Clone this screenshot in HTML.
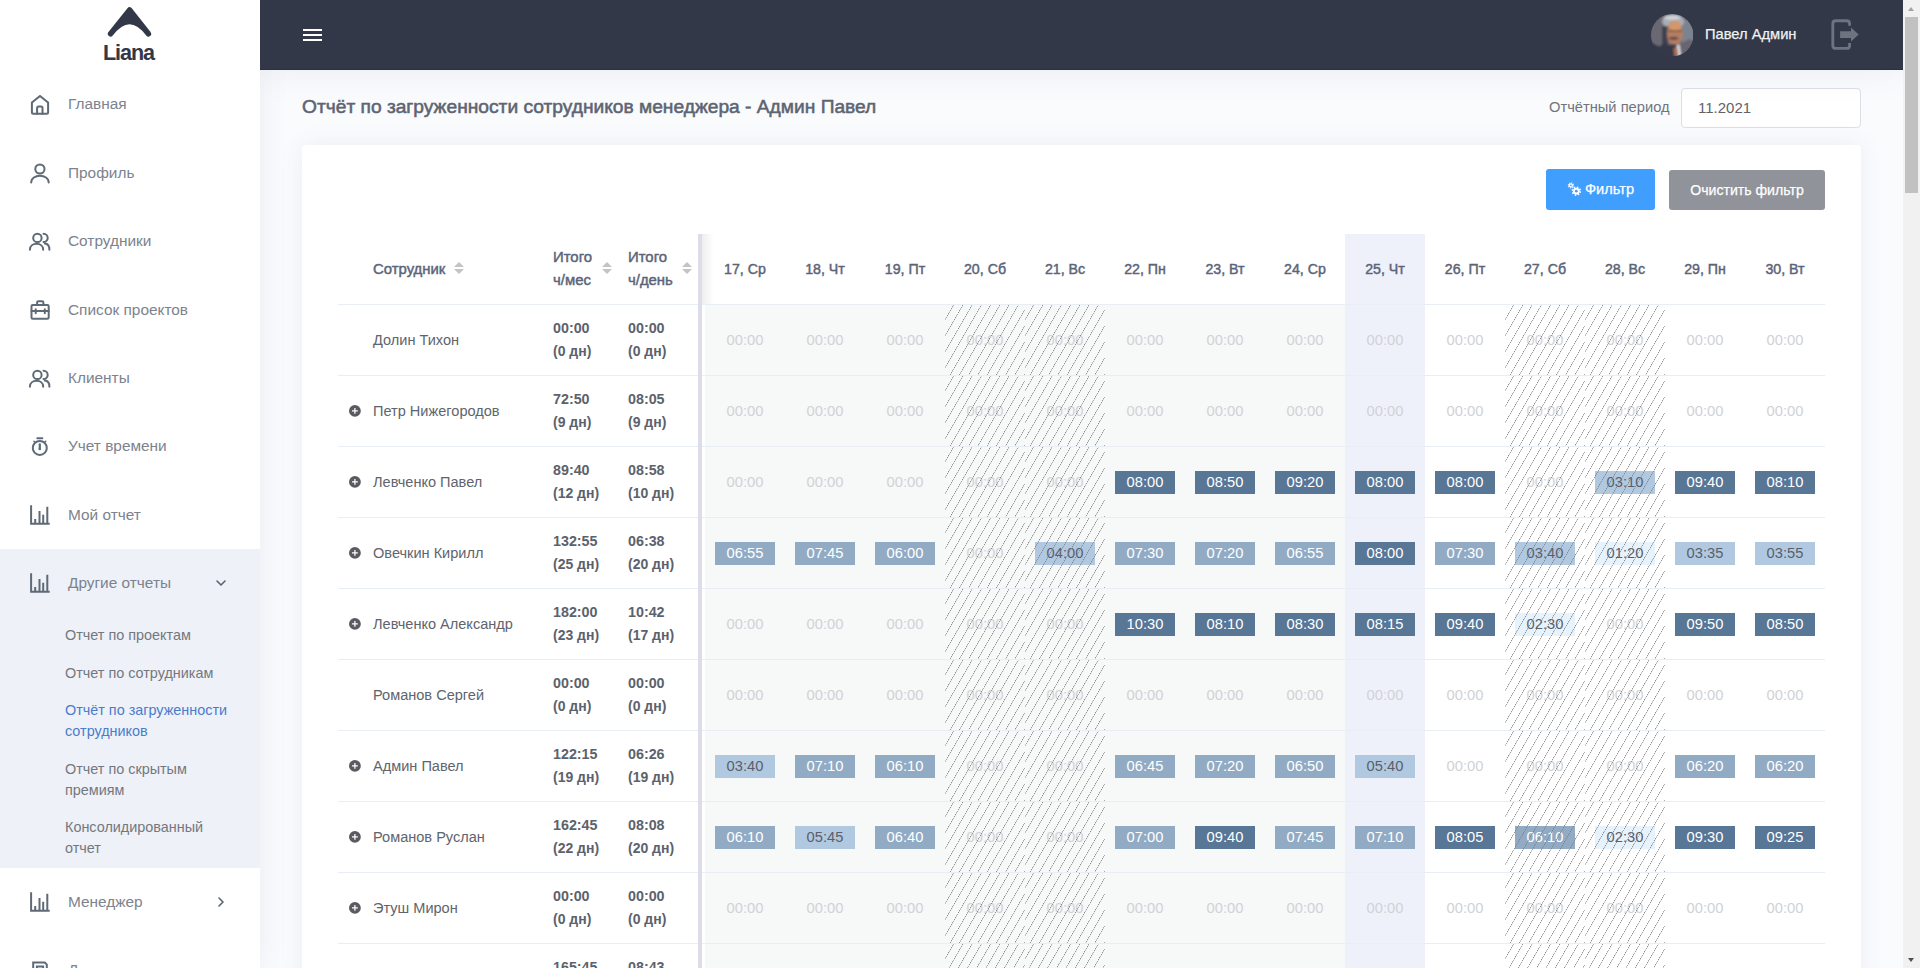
<!DOCTYPE html>
<html lang="ru">
<head>
<meta charset="utf-8">
<title>Liana</title>
<style>
*{box-sizing:border-box;margin:0;padding:0}
html,body{width:1920px;height:968px;overflow:hidden;background:#fafbfd;font-family:"Liberation Sans",sans-serif;color:#5a6270}
i{font-style:normal;display:block}
#side{position:absolute;left:0;top:0;width:260px;height:968px;background:#fff;overflow:hidden;z-index:3}
#sideshadow{position:absolute;left:0;top:0;width:260px;height:968px;box-shadow:0 0 28px 0 rgba(70,75,130,.09);z-index:1}
#logo{position:absolute;left:0;top:0;width:260px;height:70px}
#logo .lt{position:absolute;left:-1.5px;width:260px;top:40px;text-align:center;font-weight:bold;font-size:21.6px;line-height:26px;color:#323847;letter-spacing:-1.05px}
.mi{position:absolute;left:0;width:260px;height:68px;font-size:15.4px;color:#7c838e}
.mi svg{position:absolute;left:28px;top:23px;width:24px;height:24px;stroke:#5f6a77;fill:none;stroke-width:2;stroke-linecap:round;stroke-linejoin:round}
.mi span{position:absolute;left:68px;top:24px;line-height:20px;white-space:nowrap}
.mi .arr{position:absolute;left:214px;top:27px;width:14px;height:14px;stroke:#59636f;stroke-width:1.6}
#grp{position:absolute;left:0;top:549px;width:260px;height:319px;background:#eef1f7}
.si{position:absolute;left:65px;margin-top:1px;font-size:14.4px;line-height:21.4px;color:#73787f;white-space:nowrap}
.si.act{color:#4a7ccc}
#top{position:absolute;left:260px;top:0;width:1643px;height:70px;background:#323847;box-shadow:0 0 36px 0 rgba(70,75,130,.085);border-bottom:1px solid #2a3040;z-index:2}
#burger{position:absolute;left:42.5px;top:29px;width:19px;height:12px}
#burger b{position:absolute;left:0;width:19px;height:2px;background:#fff}
#uname{-webkit-text-stroke:.25px #f0f1f3;position:absolute;left:1445px;top:24px;font-size:14.7px;line-height:20px;color:#f0f1f3;white-space:nowrap}
#scroll{z-index:4;position:absolute;left:1903px;top:0;width:17px;height:968px;background:#f1f1f1}
#scroll .th{position:absolute;left:2px;top:17px;width:13px;height:176px;background:#c1c1c1}
#scroll .up,#scroll .dn{position:absolute;left:5px;width:0;height:0;border-left:3.5px solid transparent;border-right:3.5px solid transparent}
#scroll .up{top:7px;border-bottom:4px solid #a3a3a3}
#scroll .dn{top:958px;border-top:4px solid #505050}
#title{position:absolute;left:302px;top:95px;font-size:19.2px;line-height:24px;font-weight:normal;-webkit-text-stroke:.55px #5d6472;color:#5d6472;white-space:nowrap}
#plabel{position:absolute;left:1549px;top:97px;font-size:14.7px;line-height:20px;color:#70757d;white-space:nowrap}
#pinput{position:absolute;left:1681px;top:88px;width:180px;height:40px;background:#fff;border:1px solid #dcdfe6;border-radius:4px;font-size:15px;line-height:38px;padding-left:16px;color:#606266}
#card{position:absolute;left:302px;top:145px;width:1559px;height:900px;background:#fff;border-radius:4px;box-shadow:0 0 24px 0 rgba(70,75,130,.08)}
.btn{-webkit-text-stroke:.25px #fff;position:absolute;height:41px;border-radius:3px;color:#fff;font-size:14.4px;line-height:41px;text-align:center;white-space:nowrap}
#bf{left:1546px;top:169px;width:109px;background:#409eff;font-size:14.6px;text-align:left}
#bc{left:1669px;top:170px;width:156px;height:40px;line-height:40px;background:#909399;font-size:14.1px}
#tbl{position:absolute;left:338px;top:234px;width:1487px;height:760px}
.thead{position:absolute;left:0;top:0;width:1487px;height:70px;font-weight:normal;-webkit-text-stroke:.45px #5b6478;font-size:14.9px;color:#5b6478}
.thead .hc{position:absolute;top:0;height:70px}
.thead .hc span{position:absolute;left:0;top:50%;transform:translateY(-50%);line-height:23px;white-space:nowrap}
.thead .c-name{left:35px;width:180px}
.thead .c-m{left:215px;width:75px}
.thead .c-d{left:290px;width:70px}
.sort{position:absolute;top:28px;width:10px;height:13px}
.c-name .sort{left:81px}.c-m .sort{left:49px}.c-d .sort{left:54px}
.sort:before,.sort:after{content:"";position:absolute;left:0;width:0;height:0;border-left:5px solid transparent;border-right:5px solid transparent}
.sort:before{top:0;border-bottom:5px solid #c4c4c6}
.sort:after{top:7px;border-top:5px solid #c4c4c6}
.hd{position:absolute;top:0;width:80px;height:70px;line-height:71px;font-size:14.2px;text-align:center;white-space:nowrap}
.hd.today{background:#eff1fa}
.tr{position:absolute;left:0;width:1487px;height:71px;border-top:1px solid #e9edf4;font-size:14.55px;color:#60656d}
.tr .c-name{position:absolute;left:35px;top:0;line-height:70px;white-space:nowrap}
.tr .c-m,.tr .c-d{position:absolute;top:12px;line-height:23px;font-weight:bold;font-size:14.3px;color:#5c626c;white-space:nowrap}
.tr small{font-size:14px}
.tr .c-m{left:215px}
.tr .c-d{left:290px}
.plus{position:absolute;left:11.3px;top:29px;width:11.8px;height:11.8px}
.td{position:absolute;top:0;width:80px;height:70px;text-align:center;font-size:14.7px;line-height:70px;color:#d0d2d5}
.td.past{background:#f7f8f8}
.td.today{background:#eff1fa}
.td.we:after{content:"";position:absolute;left:0;top:0;width:80px;height:70px;background-image:repeating-linear-gradient(120deg,rgba(125,125,125,0) .1px,rgba(125,125,125,0) 7.1px,rgba(125,125,125,.87) 7.28px,rgba(125,125,125,.84) 7.5px,rgba(125,125,125,.42) 7.7px,rgba(125,125,125,0) 8.1px)}
.td span{position:absolute;left:10px;top:24px;width:60px;height:23px;line-height:23px}
.td .z{color:#d0d2d6}
.td .b1{background:#e6f2fc;color:#5a5f6b}
.td .b2{background:#b1c9e0;color:#5a5f6b}
.td .b3{background:#92abc4;color:#fff}
.td .b4{background:#587696;color:#fff}
#divider{position:absolute;left:360px;top:0;width:4px;height:760px;background:#dcdde8}
#dshadow{position:absolute;left:364px;top:0;width:12px;height:70px;background:linear-gradient(90deg,#eeeef1,#fff)}
</style>
</head>
<body>
<div id="sideshadow"></div>
<div id="side">
 <div id="logo">
  <svg style="position:absolute;left:90px;top:0" width="80" height="70" viewBox="0 0 80 70"><path d="M20.6 33.8 L39.6 9.95 L58.4 33.8 Q39.6 9.1 20.6 33.8 Z" fill="#323847" stroke="#323847" stroke-width="5.5" stroke-linejoin="round" stroke-linecap="round"/></svg>
  <div class="lt">Liana</div>
 </div>
 <div id="grp"></div>
 <div class="mi" style="top:70px"><svg viewBox="0 0 24 24"><path d="M3.9 9.6 L12 2.900 L20.1 9.6 V19.2 Q20.1 20.7 18.6 20.7 H5.4 Q3.9 20.7 3.9 19.2 Z"/><path d="M9.1 20.7 V14.9 Q9.1 13.4 10.6 13.4 H13 Q14.5 13.4 14.5 14.9 V20.7"/></svg><span>Главная</span></div>
 <div class="mi" style="top:139px"><svg viewBox="0 0 24 24"><circle cx="11.9" cy="7" r="4.6"/><path d="M3.2 20.6 C3.2 11.500 20.7 11.500 20.7 20.6"/></svg><span>Профиль</span></div>
 <div class="mi" style="top:207px"><svg viewBox="0 0 24 24"><circle cx="9.4" cy="7.9" r="4.2"/><path d="M1.9 19.7 C1.9 11.800 15.2 11.800 15.2 19.7"/><path d="M15.5 3.7 A4.2 4.2 0 0 1 19.7 7.9 A4.2 4.2 0 0 1 15.5 12.100"/><path d="M16.8 13.6 C19.5 13.800 21.4 16 21.4 19.7"/></svg><span>Сотрудники</span></div>
 <div class="mi" style="top:276px"><svg viewBox="0 0 24 24"><rect x="3.5" y="6" width="17.2" height="13.7" rx="1.3"/><path d="M9.1 6 V3.6 Q9.1 2.300 10.4 2.300 H14.1 Q15.4 2.300 15.4 3.6 V6"/><path d="M3.5 12 H20.7"/><path d="M7.7 10.300 V14.300 M16.8 10.300 V14.300"/></svg><span>Список проектов</span></div>
 <div class="mi" style="top:344px"><svg viewBox="0 0 24 24"><circle cx="9.4" cy="7.9" r="4.2"/><path d="M1.9 19.7 C1.9 11.800 15.2 11.800 15.2 19.7"/><path d="M15.5 3.7 A4.2 4.2 0 0 1 19.7 7.9 A4.2 4.2 0 0 1 15.5 12.100"/><path d="M16.8 13.6 C19.5 13.800 21.4 16 21.4 19.7"/></svg><span>Клиенты</span></div>
 <div class="mi" style="top:412px"><svg viewBox="0 0 24 24"><circle cx="11.8" cy="12.900" r="7"/><path d="M9.3 3.300 H14.3"/><path d="M5.9 6.200 L6.9 7.200 M17.7 6.200 L16.7 7.200" stroke-width="1.5"/><path d="M11.8 9.300 V13.500" stroke-width="2.2"/><circle cx="11.8" cy="14" r="1.3" fill="#5f6a77" stroke="none"/></svg><span>Учет времени</span></div>
 <div class="mi" style="top:481px"><svg viewBox="0 0 24 24" style="stroke-linecap:butt;stroke-linejoin:miter"><path d="M3.1 1.300 V19.800 H21.7"/><path d="M7.2 19.800 V15.100 M11.5 19.800 V7.100 M15.2 19.800 V10.800 M19.3 19.800 V2.700"/></svg><span>Мой отчет</span></div>
 <div class="mi" style="top:549px"><svg viewBox="0 0 24 24" style="stroke-linecap:butt;stroke-linejoin:miter"><path d="M3.1 1.300 V19.800 H21.7"/><path d="M7.2 19.800 V15.100 M11.5 19.800 V7.100 M15.2 19.800 V10.800 M19.3 19.800 V2.700"/></svg><span>Другие отчеты</span><svg class="arr" viewBox="0 0 14 14"><path d="M3 5 L7 9 L11 5"/></svg></div>
 <div class="si" style="top:624px">Отчет по проектам</div>
 <div class="si" style="top:662px">Отчет по сотрудникам</div>
 <div class="si act" style="top:699px">Отчёт по загруженности<br>сотрудников</div>
 <div class="si" style="top:758px">Отчет по скрытым<br>премиям</div>
 <div class="si" style="top:816px">Консолидированный<br>отчет</div>
 <div class="mi" style="top:868px"><svg viewBox="0 0 24 24" style="stroke-linecap:butt;stroke-linejoin:miter"><path d="M3.1 1.300 V19.800 H21.7"/><path d="M7.2 19.800 V15.100 M11.5 19.800 V7.100 M15.2 19.800 V10.800 M19.3 19.800 V2.700"/></svg><span>Менеджер</span><svg class="arr" viewBox="0 0 14 14"><path d="M5 3 L9 7 L5 11"/></svg></div>
 <div class="mi" style="top:935.5px"><svg viewBox="0 0 24 24" style="stroke-linejoin:miter"><path d="M5.2 3.600 H16.800 L18.800 5.600 V20.100 H5.200 Z"/><rect x="8.900" y="7.500" width="6.200" height="5"/></svg><span>Д<b style="font-weight:normal;position:relative;top:1px">окументы</b></span></div>
</div>
<div id="top">
 <div id="burger"><b style="top:0"></b><b style="top:5px"></b><b style="top:10px"></b></div>
 <svg id="ava" style="position:absolute;left:1390.8px;top:14px" width="42.4" height="42.4" viewBox="0 0 42 42">
  <defs><clipPath id="avc"><circle cx="21" cy="21" r="21"/></clipPath><filter id="avb" x="-10%" y="-10%" width="120%" height="120%"><feGaussianBlur stdDeviation="1.0"/></filter></defs>
  <g clip-path="url(#avc)"><g filter="url(#avb)">
   <rect x="-3" y="-3" width="48" height="48" fill="#6b6973"/>
   <ellipse cx="37" cy="19" rx="8" ry="14" fill="#7b8390"/>
   <ellipse cx="22" cy="7.5" rx="11" ry="7" fill="#a9adb6"/>
   <ellipse cx="21" cy="3.6" rx="8" ry="2.4" fill="#cfd2d7"/>
   <rect x="11" y="12" width="5.5" height="19" fill="#3d3f4d"/>
   <ellipse cx="23.6" cy="19" rx="7.8" ry="12.5" fill="#b57e64"/>
   <ellipse cx="24" cy="12" rx="6" ry="5" fill="#d4976b"/>
   <rect x="17" y="16" width="13.500" height="1.6" fill="#5a4038" opacity=".65"/>
   <ellipse cx="22.5" cy="24" rx="4.6" ry="1.5" fill="#5e4642"/>
   <ellipse cx="22" cy="32.5" rx="6.5" ry="2.6" fill="#3a3a46"/>
   <path d="M28 30 L38 25 L45 28 L45 45 L30 45 Z" fill="#67656f"/>
   <path d="M-3 27 L8 32 L15 28.500 L21 34 L28 45 L-3 45 Z" fill="#343947"/>
   <path d="M25 31.500 L28.200 30 L30 42 L27 42 Z" fill="#dcdde0"/>
   <path d="M22.500 34 L26 33 L27.300 42 L23 42 Z" fill="#a8705a"/>
  </g></g>
 </svg>
 <div id="uname">Павел Админ</div>
 <svg style="position:absolute;left:1571px;top:19px" width="30" height="32" viewBox="0 0 30 32"><path d="M18.6 6.75 V4.7 Q18.6 1.7 15.6 1.7 H4.8 Q1.8 1.7 1.8 4.7 V26.4 Q1.8 29.4 4.8 29.4 H15.6 Q18.6 29.4 18.6 26.4 V24" fill="none" stroke="#6c7480" stroke-width="2.85"/><path d="M9.1 12.2 H20 V8.6 L27.7 15.55 L20 22.5 V18.9 H9.1 Z" fill="#6c7480"/></svg>
</div>
<div id="scroll"><i class="up"></i><i class="th"></i><i class="dn"></i></div>
<div id="title">Отчёт по загруженности сотрудников менеджера - Админ Павел</div>
<div id="plabel">Отчётный период</div>
<div id="pinput">11.2021</div>
<div id="card"></div>
<div class="btn" id="bf"><svg style="position:absolute;left:20px;top:11px" width="18" height="18" viewBox="0 0 18 18"><g fill="none" stroke="#fff"><circle cx="4.9" cy="5.4" r="2.5" stroke-width="1.2" stroke-dasharray="0.95 1.013"/><circle cx="10.35" cy="11.15" r="3.9" stroke-width="1.7" stroke-dasharray="1.5 1.563"/></g><circle cx="4.9" cy="5.4" r="2.1" fill="#fff"/><circle cx="10.35" cy="11.15" r="3.3" fill="#fff"/><circle cx="4.9" cy="5.4" r="0.85" fill="#409eff"/><circle cx="10.35" cy="11.15" r="1.4" fill="#409eff"/></svg><span style="position:absolute;left:39px;top:0">Фильтр</span></div>
<div class="btn" id="bc">Очистить фильтр</div>
<div id="tbl">
<div class="thead">
<div class="hc c-name"><span>Сотрудник</span><i class="sort"></i></div>
<div class="hc c-m"><span>Итого<br>ч/мес</span><i class="sort"></i></div>
<div class="hc c-d"><span>Итого<br>ч/день</span><i class="sort"></i></div>
<div class="hd" style="left:367px">17, Ср</div>
<div class="hd" style="left:447px">18, Чт</div>
<div class="hd" style="left:527px">19, Пт</div>
<div class="hd" style="left:607px">20, Сб</div>
<div class="hd" style="left:687px">21, Вс</div>
<div class="hd" style="left:767px">22, Пн</div>
<div class="hd" style="left:847px">23, Вт</div>
<div class="hd" style="left:927px">24, Ср</div>
<div class="hd today" style="left:1007px">25, Чт</div>
<div class="hd" style="left:1087px">26, Пт</div>
<div class="hd" style="left:1167px">27, Сб</div>
<div class="hd" style="left:1247px">28, Вс</div>
<div class="hd" style="left:1327px">29, Пн</div>
<div class="hd" style="left:1407px">30, Вт</div>
</div>
<div class="tr" style="top:70px">
<div class="c-name">Долин Тихон</div>
<div class="c-m">00:00<br><small>(0 дн)</small></div>
<div class="c-d">00:00<br><small>(0 дн)</small></div>
<div class="td past" style="left:367px"><span class="z">00:00</span></div>
<div class="td past" style="left:447px"><span class="z">00:00</span></div>
<div class="td past" style="left:527px"><span class="z">00:00</span></div>
<div class="td past we" style="left:607px"><span class="z">00:00</span></div>
<div class="td past we" style="left:687px"><span class="z">00:00</span></div>
<div class="td past" style="left:767px"><span class="z">00:00</span></div>
<div class="td past" style="left:847px"><span class="z">00:00</span></div>
<div class="td past" style="left:927px"><span class="z">00:00</span></div>
<div class="td today" style="left:1007px"><span class="z">00:00</span></div>
<div class="td" style="left:1087px"><span class="z">00:00</span></div>
<div class="td we" style="left:1167px"><span class="z">00:00</span></div>
<div class="td we" style="left:1247px"><span class="z">00:00</span></div>
<div class="td" style="left:1327px"><span class="z">00:00</span></div>
<div class="td" style="left:1407px"><span class="z">00:00</span></div>
</div>
<div class="tr" style="top:141px">
<svg class="plus" viewBox="0 0 11.6 11.6"><circle cx="5.8" cy="5.8" r="5.8" fill="#595b61"/><path d="M2.9 5.75H8.7M5.8 2.85V8.65" stroke="#fff" stroke-width="1.25" fill="none"/></svg>
<div class="c-name">Петр Нижегородов</div>
<div class="c-m">72:50<br><small>(9 дн)</small></div>
<div class="c-d">08:05<br><small>(9 дн)</small></div>
<div class="td past" style="left:367px"><span class="z">00:00</span></div>
<div class="td past" style="left:447px"><span class="z">00:00</span></div>
<div class="td past" style="left:527px"><span class="z">00:00</span></div>
<div class="td past we" style="left:607px"><span class="z">00:00</span></div>
<div class="td past we" style="left:687px"><span class="z">00:00</span></div>
<div class="td past" style="left:767px"><span class="z">00:00</span></div>
<div class="td past" style="left:847px"><span class="z">00:00</span></div>
<div class="td past" style="left:927px"><span class="z">00:00</span></div>
<div class="td today" style="left:1007px"><span class="z">00:00</span></div>
<div class="td" style="left:1087px"><span class="z">00:00</span></div>
<div class="td we" style="left:1167px"><span class="z">00:00</span></div>
<div class="td we" style="left:1247px"><span class="z">00:00</span></div>
<div class="td" style="left:1327px"><span class="z">00:00</span></div>
<div class="td" style="left:1407px"><span class="z">00:00</span></div>
</div>
<div class="tr" style="top:212px">
<svg class="plus" viewBox="0 0 11.6 11.6"><circle cx="5.8" cy="5.8" r="5.8" fill="#595b61"/><path d="M2.9 5.75H8.7M5.8 2.85V8.65" stroke="#fff" stroke-width="1.25" fill="none"/></svg>
<div class="c-name">Левченко Павел</div>
<div class="c-m">89:40<br><small>(12 дн)</small></div>
<div class="c-d">08:58<br><small>(10 дн)</small></div>
<div class="td past" style="left:367px"><span class="z">00:00</span></div>
<div class="td past" style="left:447px"><span class="z">00:00</span></div>
<div class="td past" style="left:527px"><span class="z">00:00</span></div>
<div class="td past we" style="left:607px"><span class="z">00:00</span></div>
<div class="td past we" style="left:687px"><span class="z">00:00</span></div>
<div class="td past" style="left:767px"><span class="b4">08:00</span></div>
<div class="td past" style="left:847px"><span class="b4">08:50</span></div>
<div class="td past" style="left:927px"><span class="b4">09:20</span></div>
<div class="td today" style="left:1007px"><span class="b4">08:00</span></div>
<div class="td" style="left:1087px"><span class="b4">08:00</span></div>
<div class="td we" style="left:1167px"><span class="z">00:00</span></div>
<div class="td we" style="left:1247px"><span class="b2">03:10</span></div>
<div class="td" style="left:1327px"><span class="b4">09:40</span></div>
<div class="td" style="left:1407px"><span class="b4">08:10</span></div>
</div>
<div class="tr" style="top:283px">
<svg class="plus" viewBox="0 0 11.6 11.6"><circle cx="5.8" cy="5.8" r="5.8" fill="#595b61"/><path d="M2.9 5.75H8.7M5.8 2.85V8.65" stroke="#fff" stroke-width="1.25" fill="none"/></svg>
<div class="c-name">Овечкин Кирилл</div>
<div class="c-m">132:55<br><small>(25 дн)</small></div>
<div class="c-d">06:38<br><small>(20 дн)</small></div>
<div class="td past" style="left:367px"><span class="b3">06:55</span></div>
<div class="td past" style="left:447px"><span class="b3">07:45</span></div>
<div class="td past" style="left:527px"><span class="b3">06:00</span></div>
<div class="td past we" style="left:607px"><span class="z">00:00</span></div>
<div class="td past we" style="left:687px"><span class="b2">04:00</span></div>
<div class="td past" style="left:767px"><span class="b3">07:30</span></div>
<div class="td past" style="left:847px"><span class="b3">07:20</span></div>
<div class="td past" style="left:927px"><span class="b3">06:55</span></div>
<div class="td today" style="left:1007px"><span class="b4">08:00</span></div>
<div class="td" style="left:1087px"><span class="b3">07:30</span></div>
<div class="td we" style="left:1167px"><span class="b2">03:40</span></div>
<div class="td we" style="left:1247px"><span class="b1">01:20</span></div>
<div class="td" style="left:1327px"><span class="b2">03:35</span></div>
<div class="td" style="left:1407px"><span class="b2">03:55</span></div>
</div>
<div class="tr" style="top:354px">
<svg class="plus" viewBox="0 0 11.6 11.6"><circle cx="5.8" cy="5.8" r="5.8" fill="#595b61"/><path d="M2.9 5.75H8.7M5.8 2.85V8.65" stroke="#fff" stroke-width="1.25" fill="none"/></svg>
<div class="c-name">Левченко Александр</div>
<div class="c-m">182:00<br><small>(23 дн)</small></div>
<div class="c-d">10:42<br><small>(17 дн)</small></div>
<div class="td past" style="left:367px"><span class="z">00:00</span></div>
<div class="td past" style="left:447px"><span class="z">00:00</span></div>
<div class="td past" style="left:527px"><span class="z">00:00</span></div>
<div class="td past we" style="left:607px"><span class="z">00:00</span></div>
<div class="td past we" style="left:687px"><span class="z">00:00</span></div>
<div class="td past" style="left:767px"><span class="b4">10:30</span></div>
<div class="td past" style="left:847px"><span class="b4">08:10</span></div>
<div class="td past" style="left:927px"><span class="b4">08:30</span></div>
<div class="td today" style="left:1007px"><span class="b4">08:15</span></div>
<div class="td" style="left:1087px"><span class="b4">09:40</span></div>
<div class="td we" style="left:1167px"><span class="b1">02:30</span></div>
<div class="td we" style="left:1247px"><span class="z">00:00</span></div>
<div class="td" style="left:1327px"><span class="b4">09:50</span></div>
<div class="td" style="left:1407px"><span class="b4">08:50</span></div>
</div>
<div class="tr" style="top:425px">
<div class="c-name">Романов Сергей</div>
<div class="c-m">00:00<br><small>(0 дн)</small></div>
<div class="c-d">00:00<br><small>(0 дн)</small></div>
<div class="td past" style="left:367px"><span class="z">00:00</span></div>
<div class="td past" style="left:447px"><span class="z">00:00</span></div>
<div class="td past" style="left:527px"><span class="z">00:00</span></div>
<div class="td past we" style="left:607px"><span class="z">00:00</span></div>
<div class="td past we" style="left:687px"><span class="z">00:00</span></div>
<div class="td past" style="left:767px"><span class="z">00:00</span></div>
<div class="td past" style="left:847px"><span class="z">00:00</span></div>
<div class="td past" style="left:927px"><span class="z">00:00</span></div>
<div class="td today" style="left:1007px"><span class="z">00:00</span></div>
<div class="td" style="left:1087px"><span class="z">00:00</span></div>
<div class="td we" style="left:1167px"><span class="z">00:00</span></div>
<div class="td we" style="left:1247px"><span class="z">00:00</span></div>
<div class="td" style="left:1327px"><span class="z">00:00</span></div>
<div class="td" style="left:1407px"><span class="z">00:00</span></div>
</div>
<div class="tr" style="top:496px">
<svg class="plus" viewBox="0 0 11.6 11.6"><circle cx="5.8" cy="5.8" r="5.8" fill="#595b61"/><path d="M2.9 5.75H8.7M5.8 2.85V8.65" stroke="#fff" stroke-width="1.25" fill="none"/></svg>
<div class="c-name">Админ Павел</div>
<div class="c-m">122:15<br><small>(19 дн)</small></div>
<div class="c-d">06:26<br><small>(19 дн)</small></div>
<div class="td past" style="left:367px"><span class="b2">03:40</span></div>
<div class="td past" style="left:447px"><span class="b3">07:10</span></div>
<div class="td past" style="left:527px"><span class="b3">06:10</span></div>
<div class="td past we" style="left:607px"><span class="z">00:00</span></div>
<div class="td past we" style="left:687px"><span class="z">00:00</span></div>
<div class="td past" style="left:767px"><span class="b3">06:45</span></div>
<div class="td past" style="left:847px"><span class="b3">07:20</span></div>
<div class="td past" style="left:927px"><span class="b3">06:50</span></div>
<div class="td today" style="left:1007px"><span class="b2">05:40</span></div>
<div class="td" style="left:1087px"><span class="z">00:00</span></div>
<div class="td we" style="left:1167px"><span class="z">00:00</span></div>
<div class="td we" style="left:1247px"><span class="z">00:00</span></div>
<div class="td" style="left:1327px"><span class="b3">06:20</span></div>
<div class="td" style="left:1407px"><span class="b3">06:20</span></div>
</div>
<div class="tr" style="top:567px">
<svg class="plus" viewBox="0 0 11.6 11.6"><circle cx="5.8" cy="5.8" r="5.8" fill="#595b61"/><path d="M2.9 5.75H8.7M5.8 2.85V8.65" stroke="#fff" stroke-width="1.25" fill="none"/></svg>
<div class="c-name">Романов Руслан</div>
<div class="c-m">162:45<br><small>(22 дн)</small></div>
<div class="c-d">08:08<br><small>(20 дн)</small></div>
<div class="td past" style="left:367px"><span class="b3">06:10</span></div>
<div class="td past" style="left:447px"><span class="b2">05:45</span></div>
<div class="td past" style="left:527px"><span class="b3">06:40</span></div>
<div class="td past we" style="left:607px"><span class="z">00:00</span></div>
<div class="td past we" style="left:687px"><span class="z">00:00</span></div>
<div class="td past" style="left:767px"><span class="b3">07:00</span></div>
<div class="td past" style="left:847px"><span class="b4">09:40</span></div>
<div class="td past" style="left:927px"><span class="b3">07:45</span></div>
<div class="td today" style="left:1007px"><span class="b3">07:10</span></div>
<div class="td" style="left:1087px"><span class="b4">08:05</span></div>
<div class="td we" style="left:1167px"><span class="b3">06:10</span></div>
<div class="td we" style="left:1247px"><span class="b1">02:30</span></div>
<div class="td" style="left:1327px"><span class="b4">09:30</span></div>
<div class="td" style="left:1407px"><span class="b4">09:25</span></div>
</div>
<div class="tr" style="top:638px">
<svg class="plus" viewBox="0 0 11.6 11.6"><circle cx="5.8" cy="5.8" r="5.8" fill="#595b61"/><path d="M2.9 5.75H8.7M5.8 2.85V8.65" stroke="#fff" stroke-width="1.25" fill="none"/></svg>
<div class="c-name">Этуш Мирон</div>
<div class="c-m">00:00<br><small>(0 дн)</small></div>
<div class="c-d">00:00<br><small>(0 дн)</small></div>
<div class="td past" style="left:367px"><span class="z">00:00</span></div>
<div class="td past" style="left:447px"><span class="z">00:00</span></div>
<div class="td past" style="left:527px"><span class="z">00:00</span></div>
<div class="td past we" style="left:607px"><span class="z">00:00</span></div>
<div class="td past we" style="left:687px"><span class="z">00:00</span></div>
<div class="td past" style="left:767px"><span class="z">00:00</span></div>
<div class="td past" style="left:847px"><span class="z">00:00</span></div>
<div class="td past" style="left:927px"><span class="z">00:00</span></div>
<div class="td today" style="left:1007px"><span class="z">00:00</span></div>
<div class="td" style="left:1087px"><span class="z">00:00</span></div>
<div class="td we" style="left:1167px"><span class="z">00:00</span></div>
<div class="td we" style="left:1247px"><span class="z">00:00</span></div>
<div class="td" style="left:1327px"><span class="z">00:00</span></div>
<div class="td" style="left:1407px"><span class="z">00:00</span></div>
</div>
<div class="tr" style="top:709px">
<svg class="plus" viewBox="0 0 11.6 11.6"><circle cx="5.8" cy="5.8" r="5.8" fill="#595b61"/><path d="M2.9 5.75H8.7M5.8 2.85V8.65" stroke="#fff" stroke-width="1.25" fill="none"/></svg>
<div class="c-name">Левченко Денис</div>
<div class="c-m">165:45<br><small>(21 дн)</small></div>
<div class="c-d">08:43<br><small>(19 дн)</small></div>
<div class="td past" style="left:367px"><span class="z">00:00</span></div>
<div class="td past" style="left:447px"><span class="z">00:00</span></div>
<div class="td past" style="left:527px"><span class="z">00:00</span></div>
<div class="td past we" style="left:607px"><span class="z">00:00</span></div>
<div class="td past we" style="left:687px"><span class="z">00:00</span></div>
<div class="td past" style="left:767px"><span class="z">00:00</span></div>
<div class="td past" style="left:847px"><span class="z">00:00</span></div>
<div class="td past" style="left:927px"><span class="z">00:00</span></div>
<div class="td today" style="left:1007px"><span class="z">00:00</span></div>
<div class="td" style="left:1087px"><span class="z">00:00</span></div>
<div class="td we" style="left:1167px"><span class="z">00:00</span></div>
<div class="td we" style="left:1247px"><span class="z">00:00</span></div>
<div class="td" style="left:1327px"><span class="z">00:00</span></div>
<div class="td" style="left:1407px"><span class="z">00:00</span></div>
</div>
<div id="divider"></div>
<div id="dshadow"></div>
</div>
</body>
</html>
